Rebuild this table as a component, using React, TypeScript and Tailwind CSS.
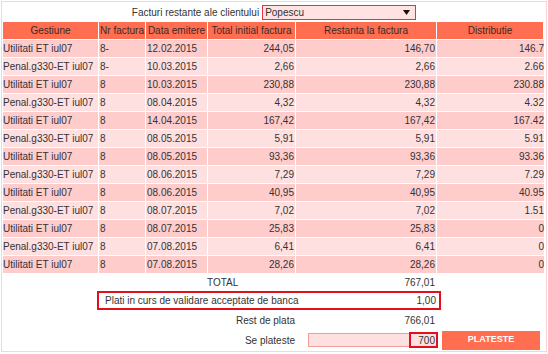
const rows = [
  ["Utilitati ET iul07", "8-", "12.02.2015", "244,05", "146,70", "146.7"],
  ["Penal.g330-ET iul07", "8-", "10.03.2015", "2,66", "2,66", "2.66"],
  ["Utilitati ET iul07", "8", "10.03.2015", "230,88", "230,88", "230.88"],
  ["Penal.g330-ET iul07", "8", "08.04.2015", "4,32", "4,32", "4.32"],
  ["Utilitati ET iul07", "8", "14.04.2015", "167,42", "167,42", "167.42"],
  ["Penal.g330-ET iul07", "8", "08.05.2015", "5,91", "5,91", "5.91"],
  ["Utilitati ET iul07", "8", "08.05.2015", "93,36", "93,36", "93.36"],
  ["Penal.g330-ET iul07", "8", "08.06.2015", "7,29", "7,29", "7.29"],
  ["Utilitati ET iul07", "8", "08.06.2015", "40,95", "40,95", "40.95"],
  ["Penal.g330-ET iul07", "8", "08.07.2015", "7,02", "7,02", "1.51"],
  ["Utilitati ET iul07", "8", "08.07.2015", "25,83", "25,83", "0"],
  ["Penal.g330-ET iul07", "8", "07.08.2015", "6,41", "6,41", "0"],
  ["Utilitati ET iul07", "8", "07.08.2015", "28,26", "28,26", "0"],
];

const headers = ["Gestiune", "Nr factura", "Data emitere", "Total initial factura", "Restanta la factura", "Distributie"];

const cols = "grid grid-cols-[95px_46px_61px_87px_140px_106px] gap-x-px";

export default function App() {
  return (
    <div className="w-[548px] h-[354px] bg-white pl-px pt-px font-['Liberation_Sans',Arial,sans-serif] text-[10px] text-[#333]">
      <div className="w-[546px] h-[351px] border border-[#fbd3d3] px-px">
        {/* title + client select */}
        <div className="h-[20px] flex justify-center items-center gap-[3px]">
          <span>Facturi restante ale clientului</span>
          <div className="w-[154px] h-[15px] border border-[#e8333f] bg-[#ffe3e3] flex items-center justify-between pl-[2px] pr-[5px]">
            <span>Popescu</span>
            <svg width="7" height="5" viewBox="0 0 7 5">
              <path d="M0 0h7L3.5 5z" fill="#111" />
            </svg>
          </div>
        </div>

        {/* table */}
        <div className={`${cols} gap-y-px`}>
          {headers.map((h) => (
            <div key={h} className="h-[17px] bg-[#ff6e50] flex items-center justify-center whitespace-nowrap overflow-hidden text-[#3b2a26]">
              {h}
            </div>
          ))}
          {rows.map((r, i) => {
            const bg = i % 2 === 0 ? "bg-[#ffcccc]" : "bg-[#ffe0e0]";
            return [
              <div key={`${i}a`} className={`h-[17px] ${bg} flex items-center whitespace-nowrap overflow-hidden`}>{r[0]}</div>,
              <div key={`${i}b`} className={`h-[17px] ${bg} flex items-center pl-px`}>{r[1]}</div>,
              <div key={`${i}c`} className={`h-[17px] ${bg} flex items-center pl-px`}>{r[2]}</div>,
              <div key={`${i}d`} className={`h-[17px] ${bg} flex items-center justify-end pr-px`}>{r[3]}</div>,
              <div key={`${i}e`} className={`h-[17px] ${bg} flex items-center justify-end pr-px`}>{r[4]}</div>,
              <div key={`${i}f`} className={`h-[17px] ${bg} flex items-center justify-end -mr-px`}>{r[5]}</div>,
            ];
          })}
        </div>

        {/* totals */}
        <div className={`${cols} h-[18px] items-center`}>
          <div className="col-start-4 -ml-px">TOTAL</div>
          <div className="text-right pr-px">767,01</div>
        </div>

        <div className="ml-[94px] w-[344px] h-[19px] border-2 border-[#e2101e] flex items-center justify-between pl-[6px] pr-[3px]">
          <span>Plati in curs de validare acceptate de banca</span>
          <span>1,00</span>
        </div>

        <div className={`${cols} h-[20px] items-center`}>
          <div className="col-span-4 text-right">Rest de plata</div>
          <div className="text-right pr-px">766,01</div>
        </div>

        <div className={`${cols} h-[20px] items-center`}>
          <div className="col-span-4 text-right">Se plateste</div>
          <div className="pl-[12px]">
            <div className="w-[130px] h-[14px] border border-[#f39b9b] bg-[#ffe0e0] flex justify-end items-center">
              <div className="w-[29px] h-[16px] -my-px -mr-px border-2 border-[#e2101e] flex items-center justify-end pr-px">
                700
              </div>
            </div>
          </div>
          <div className="pl-[5px]">
            <div className="w-[98px] h-[19px] bg-[#ff6e50] text-white font-bold text-[9px] flex items-center justify-center">
              PLATESTE
            </div>
          </div>
        </div>
      </div>
    </div>
  );
}
